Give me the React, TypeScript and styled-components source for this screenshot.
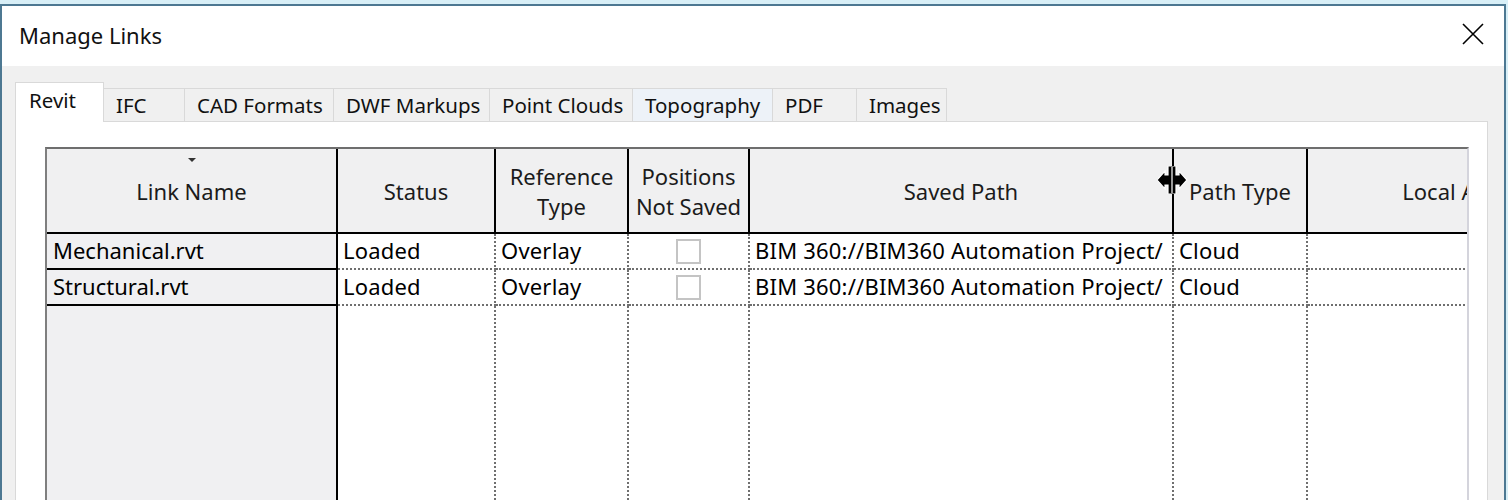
import React from 'react';
import styled, { createGlobalStyle } from 'styled-components';

const GlobalStyle = createGlobalStyle`
  html, body {
    margin: 0;
    padding: 0;
    background: #d8eff7;
  }
  body {
    font-family: "Noto Sans", "Open Sans", sans-serif;
    color: #000;
    overflow: hidden;
  }
`;

const Window = styled.div`
  margin-top: 4px;
  width: 1502px;
  height: 494px;
  border: 2px solid #4d7892;
  border-bottom: none;
  background: #f0f0f0;
  display: flex;
  flex-direction: column;
  overflow: hidden;
`;

const TitleBar = styled.div`
  height: 60px;
  flex: none;
  background: #fff;
  display: flex;
  justify-content: space-between;
  align-items: flex-start;
  padding: 0 20px 0 17px;
`;

const Title = styled.div`
  font-size: 22px;
  line-height: 22px;
  padding-top: 18px;
  color: #111;
`;

const CloseButton = styled.div`
  padding-top: 17px;
  width: 22px;
  height: 22px;
`;

const Body = styled.div`
  flex: 1;
  display: flex;
  flex-direction: column;
  padding: 16px 16px 0 13px;
  min-height: 0;
`;

const TabStrip = styled.div`
  height: 39px;
  flex: none;
  display: flex;
  align-items: flex-end;
  position: relative;
  z-index: 1;
`;

const Tab = styled.div<{ $w: number; $active?: boolean; $hover?: boolean }>`
  box-sizing: border-box;
  width: ${p => p.$w}px;
  height: ${p => (p.$active ? 40 : 33)}px;
  margin-bottom: ${p => (p.$active ? -1 : 0)}px;
  padding-left: ${p => (p.$active ? 13 : 12)}px;
  padding-bottom: ${p => (p.$active ? 5 : 1)}px;
  background: ${p => (p.$active ? '#fff' : p.$hover ? '#edf2f8' : '#f0f0f0')};
  border-top: 1px solid #d9d9d9;
  border-right: 1px solid #d9d9d9;
  border-left: ${p => (p.$active ? '1px solid #d9d9d9' : 'none')};
  display: flex;
  align-items: center;
  font-size: 20.5px;
  color: #111;
  white-space: nowrap;
`;

const Panel = styled.div`
  flex: 1;
  min-height: 0;
  background: #fff;
  border: 1px solid #d9d9d9;
  border-bottom: none;
  padding: 25px 18px 0 29px;
  display: flex;
`;

const Grid = styled.div`
  position: relative;
  flex: 1;
  min-width: 0;
  border-top: 2px solid #6e6e6e;
  border-left: 2px solid #7f7f7f;
  border-right: 2px solid #d4d4dc;
  display: grid;
  grid-template-columns: 291px 158px 133px 121px 424px 134px 296px;
  grid-template-rows: 85px 36px 36px 1fr;
  overflow: hidden;
`;

const HeaderCell = styled.div<{ $last?: boolean }>`
  position: relative;
  box-sizing: border-box;
  background: #f0f0f1;
  border-right: ${p => (p.$last ? 'none' : '2px solid #000')};
  border-bottom: 2px solid #000;
  display: flex;
  align-items: center;
  justify-content: center;
  text-align: center;
  font-size: 22px;
  line-height: 30px;
  color: #1b1b1b;
  white-space: pre-line;
`;

const SortMark = styled.span`
  position: absolute;
  top: 9px;
  left: 50%;
  margin-left: -4px;
  width: 0;
  height: 0;
  border-left: 4px solid transparent;
  border-right: 4px solid transparent;
  border-top: 4px solid #333;
`;

const RowHeader = styled.div<{ $filler?: boolean }>`
  box-sizing: border-box;
  background: #f0f0f2;
  border-right: 2px solid #000;
  border-bottom: ${p => (p.$filler ? 'none' : '2px solid #000')};
  padding: 0 0 3px 6px;
  display: flex;
  align-items: center;
  font-size: 22px;
  white-space: nowrap;
  overflow: hidden;
`;

const Cell = styled.div<{ $filler?: boolean; $center?: boolean; $last?: boolean }>`
  box-sizing: border-box;
  background: #fff;
  border-right: ${p => (p.$last ? 'none' : '2px dotted #6f6f6f')};
  border-bottom: ${p => (p.$filler ? 'none' : '2px dotted #6f6f6f')};
  padding: ${p => (p.$center ? '0' : '0 0 3px 5px')};
  display: flex;
  align-items: center;
  justify-content: ${p => (p.$center ? 'center' : 'flex-start')};
  font-size: 22px;
  letter-spacing: 0.2px;
  white-space: nowrap;
  overflow: hidden;
`;

const CheckBox = styled.span`
  box-sizing: border-box;
  width: 25px;
  height: 25px;
  border: 2px solid #c4c4c4;
  background: #fff;
`;

const ResizeCursor = styled.svg`
  position: absolute;
  left: 1111px;
  top: 17px;
  pointer-events: none;
`;

const headers = [
  'Link Name',
  'Status',
  'Reference\nType',
  'Positions\nNot Saved',
  'Saved Path',
  'Path Type',
  'Local Alias',
];

const rows = [
  {
    name: 'Mechanical.rvt',
    status: 'Loaded',
    refType: 'Overlay',
    savedPath: 'BIM 360://BIM360 Automation Project/',
    pathType: 'Cloud',
  },
  {
    name: 'Structural.rvt',
    status: 'Loaded',
    refType: 'Overlay',
    savedPath: 'BIM 360://BIM360 Automation Project/',
    pathType: 'Cloud',
  },
];

const tabs = [
  { label: 'Revit', w: 89, active: true },
  { label: 'IFC', w: 81 },
  { label: 'CAD Formats', w: 149 },
  { label: 'DWF Markups', w: 156 },
  { label: 'Point Clouds', w: 143 },
  { label: 'Topography', w: 140, hover: true },
  { label: 'PDF', w: 84 },
  { label: 'Images', w: 90 },
];

const App: React.FC = () => {
  return (
    <>
      <GlobalStyle />
      <Window>
        <TitleBar>
          <Title>Manage Links</Title>
          <CloseButton>
            <svg width="22" height="22" viewBox="0 0 22 22">
              <path d="M1 1 L21 21 M21 1 L1 21" stroke="#000" strokeWidth="1.6" fill="none" />
            </svg>
          </CloseButton>
        </TitleBar>
        <Body>
          <TabStrip>
            {tabs.map(t => (
              <Tab key={t.label} $w={t.w} $active={t.active} $hover={t.hover}>
                {t.label}
              </Tab>
            ))}
          </TabStrip>
          <Panel>
            <Grid>
              {headers.map((h, i) => (
                <HeaderCell key={h} $last={i === headers.length - 1}>
                  {i === 0 && <SortMark />}
                  {h}
                </HeaderCell>
              ))}

              {rows.map(r => (
                <React.Fragment key={r.name}>
                  <RowHeader>{r.name}</RowHeader>
                  <Cell>{r.status}</Cell>
                  <Cell>{r.refType}</Cell>
                  <Cell $center>
                    <CheckBox />
                  </Cell>
                  <Cell>{r.savedPath}</Cell>
                  <Cell>{r.pathType}</Cell>
                  <Cell $last />
                </React.Fragment>
              ))}

              {/* empty rest of the list */}
              <RowHeader $filler />
              <Cell $filler />
              <Cell $filler />
              <Cell $filler />
              <Cell $filler />
              <Cell $filler />
              <Cell $filler $last />

              <ResizeCursor width="30" height="28" viewBox="0 0 30 28">
                <path
                  d="M10 0 H18 V9 H21 V5 L29 14 L21 23 V19 H18 V28 H10 V19 H7 V23 L-1 14 L7 5 V9 H10 Z"
                  fill="#000"
                  stroke="#fff"
                  strokeWidth="1.2"
                />
                <path d="M14 1 V27" stroke="#fff" strokeWidth="1.2" />
              </ResizeCursor>
            </Grid>
          </Panel>
        </Body>
      </Window>
    </>
  );
};

export default App;
